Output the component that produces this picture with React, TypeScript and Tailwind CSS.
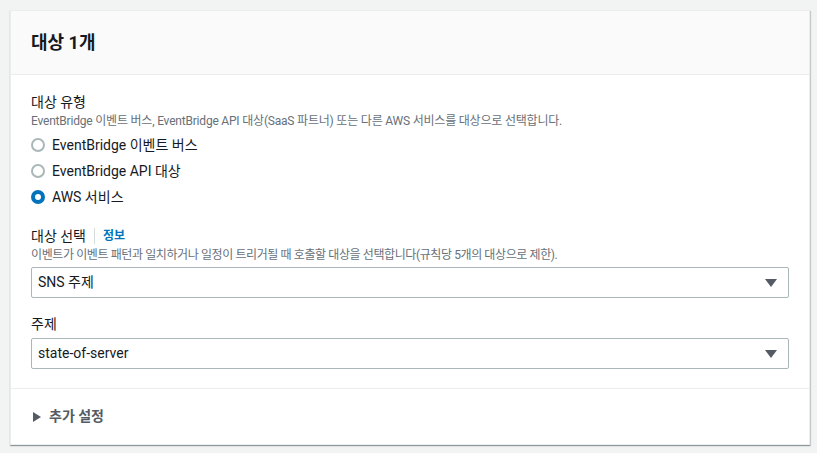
import { useState } from "react";

const font = "font-['Roboto','Noto_Sans_CJK_KR',sans-serif]";

const Caret = () => (
  <svg width="12" height="8" viewBox="0 0 12 8" className="shrink-0">
    <polygon points="0,0 12,0 6,8" fill="#545b64" />
  </svg>
);

const Select = ({ value }: { value: string }) => (
  <div className="flex h-[31px] items-center justify-between rounded-[2px] border border-[#aab7b8] bg-white pl-[6px] pr-[11px] text-[14px] text-[#16191f]">
    <span>{value}</span>
    <Caret />
  </div>
);

const Radio = ({ label, checked, onClick }: { label: string; checked: boolean; onClick: () => void }) => (
  <button onClick={onClick} className="flex h-[26px] items-center gap-[7px] text-left">
    {checked ? (
      <span className="flex h-[14px] w-[14px] items-center justify-center rounded-full bg-[#0073bb]">
        <span className="h-[6px] w-[6px] rounded-full bg-white" />
      </span>
    ) : (
      <span className="h-[14px] w-[14px] rounded-full border-2 border-[#aab7b8] bg-white" />
    )}
    <span className="text-[14px] text-[#16191f]">{label}</span>
  </button>
);

export default function App() {
  const [type, setType] = useState("AWS 서비스");
  const types = ["EventBridge 이벤트 버스", "EventBridge API 대상", "AWS 서비스"];

  return (
    <div className={`min-h-[453px] w-[817px] bg-[#f2f3f3] pl-[10px] pr-[7px] pt-[10px] ${font}`}>
      <div className="w-[800px] border border-[#eaeded] bg-white shadow-[0_1px_1px_0_rgba(0,28,36,0.3),1px_1px_1px_0_rgba(0,28,36,0.15)]">
        {/* header */}
        <div className="flex h-[64px] items-center border-b border-[#eaeded] bg-[#fafafa] px-[20px]">
          <h2 className="text-[18px] font-bold text-[#16191f]">대상 1개</h2>
        </div>

        <div className="px-[20px] pb-[19px] pt-[16px]">
          <div className="text-[14px] leading-[22px] text-[#16191f]">대상 유형</div>
          <div className="text-[12px] leading-[16px] tracking-[-0.2px] text-[#687078]">
            EventBridge 이벤트 버스, EventBridge API 대상(SaaS 파트너) 또는 다른 AWS 서비스를 대상으로 선택합니다.
          </div>
          <div className="mt-[3px] flex flex-col">
            {types.map((t) => (
              <Radio key={t} label={t} checked={type === t} onClick={() => setType(t)} />
            ))}
          </div>

          <div className="mt-[15px] flex items-center text-[14px] leading-[22px] text-[#16191f]">
            <span>대상 선택</span>
            <span className="mx-[8px] h-[16px] w-px bg-[#d5dbdb]" />
            <span className="text-[12px] font-bold text-[#0073bb]">정보</span>
          </div>
          <div className="text-[12px] leading-[16px] tracking-[-0.4px] text-[#687078]">
            이벤트가 이벤트 패턴과 일치하거나 일정이 트리거될 때 호출할 대상을 선택합니다(규칙당 5개의 대상으로 제한).
          </div>
          <div className="mt-[4px]">
            <Select value="SNS 주제" />
          </div>

          <div className="mt-[15px] text-[14px] leading-[22px] text-[#16191f]">주제</div>
          <div className="mt-[3px]">
            <Select value="state-of-server" />
          </div>
        </div>

        <div className="flex h-[56px] items-center gap-[8px] border-t border-[#eaeded] px-[22px]">
          <svg width="8" height="10" viewBox="0 0 8 10">
            <polygon points="0,0 8,5 0,10" fill="#545b64" />
          </svg>
          <span className="text-[14px] font-bold text-[#545b64]">추가 설정</span>
        </div>
      </div>
    </div>
  );
}
